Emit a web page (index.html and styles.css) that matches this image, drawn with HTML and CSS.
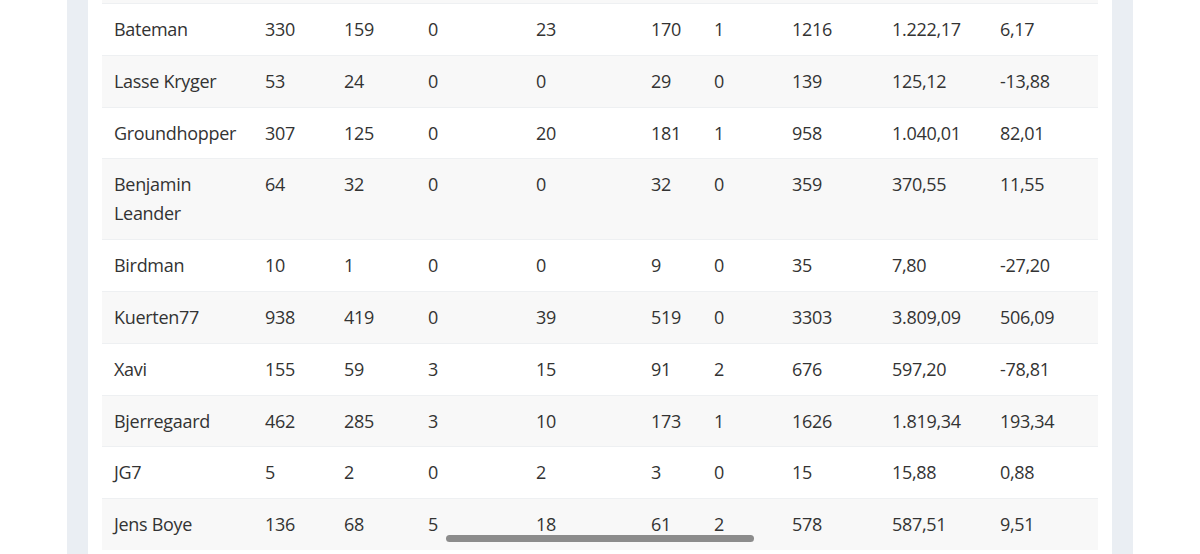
FILE: index.html
```html
<!DOCTYPE html>
<html lang="da">
<head>
    <meta charset="UTF-8">
    <meta name="viewport" content="width=device-width, initial-scale=1.0">
    <title>Stilling</title>
    <link rel="stylesheet" href="styles.css">
</head>
<body>
    <div class="page">
        <div class="card">
            <div class="table-wrap">
                <div class="row-tail"></div>
                <table class="stats">
                    <colgroup>
                        <col class="c-name">
                        <col class="c-1">
                        <col class="c-2">
                        <col class="c-3">
                        <col class="c-4">
                        <col class="c-5">
                        <col class="c-6">
                        <col class="c-7">
                        <col class="c-8">
                        <col class="c-9">
                    </colgroup>
                    <tbody>
                        <tr><td>Bateman</td><td>330</td><td>159</td><td>0</td><td>23</td><td>170</td><td>1</td><td>1216</td><td>1.222,17</td><td>6,17</td></tr>
                        <tr><td>Lasse Kryger</td><td>53</td><td>24</td><td>0</td><td>0</td><td>29</td><td>0</td><td>139</td><td>125,12</td><td>-13,88</td></tr>
                        <tr><td>Groundhopper</td><td>307</td><td>125</td><td>0</td><td>20</td><td>181</td><td>1</td><td>958</td><td>1.040,01</td><td>82,01</td></tr>
                        <tr><td>Benjamin Leander</td><td>64</td><td>32</td><td>0</td><td>0</td><td>32</td><td>0</td><td>359</td><td>370,55</td><td>11,55</td></tr>
                        <tr><td>Birdman</td><td>10</td><td>1</td><td>0</td><td>0</td><td>9</td><td>0</td><td>35</td><td>7,80</td><td>-27,20</td></tr>
                        <tr><td>Kuerten77</td><td>938</td><td>419</td><td>0</td><td>39</td><td>519</td><td>0</td><td>3303</td><td>3.809,09</td><td>506,09</td></tr>
                        <tr><td>Xavi</td><td>155</td><td>59</td><td>3</td><td>15</td><td>91</td><td>2</td><td>676</td><td>597,20</td><td>-78,81</td></tr>
                        <tr><td>Bjerregaard</td><td>462</td><td>285</td><td>3</td><td>10</td><td>173</td><td>1</td><td>1626</td><td>1.819,34</td><td>193,34</td></tr>
                        <tr><td>JG7</td><td>5</td><td>2</td><td>0</td><td>2</td><td>3</td><td>0</td><td>15</td><td>15,88</td><td>0,88</td></tr>
                        <tr><td>Jens Boye</td><td>136</td><td>68</td><td>5</td><td>18</td><td>61</td><td>2</td><td>578</td><td>587,51</td><td>9,51</td></tr>
                    </tbody>
                </table>
                <div class="scroll-thumb"></div>
            </div>
        </div>
    </div>
</body>
</html>
```

FILE: styles.css
```css
html, body {
    margin: 0;
    height: 100%;
    background-color: #fff;
}
body {
    font-family: "Open Sans", Arial, sans-serif;
    color: #333;
}
.page {
    width: 1024px;
    min-height: 100%;
    margin: 0 auto;
    padding: 0 21px;
    background-color: #eaeef3;
    overflow: hidden;
}
.card {
    background-color: #fff;
    padding: 0 14px;
    min-height: 554px;
}
.table-wrap {
    position: relative;
}
.row-tail {
    height: 3px;
    background-color: #f8f8f8;
    border-bottom: 1px solid #eef0f2;
}
.stats {
    width: 996px;
    border-collapse: collapse;
    table-layout: fixed;
    font-size: 18px;
    line-height: 29px;
    letter-spacing: -0.3px;
}
.stats td {
    padding: 11px 12px 10.8px;
    vertical-align: top;
    border-top: 1px solid #eef0f2;
}
.stats tr:first-child td {
    border-top: none;
}
.stats tr:nth-child(even) td {
    background-color: #f8f8f8;
}
.c-name { width: 151px; }
.c-1 { width: 79px; }
.c-2 { width: 84px; }
.c-3 { width: 108px; }
.c-4 { width: 115px; }
.c-5 { width: 63px; }
.c-6 { width: 78px; }
.c-7 { width: 100px; }
.c-8 { width: 108px; }
.c-9 { width: 110px; }
.scroll-thumb {
    position: absolute;
    left: 344px;
    top: 535px;
    width: 308px;
    height: 7px;
    border-radius: 4px;
    background-color: #8c8c8c;
}
```
